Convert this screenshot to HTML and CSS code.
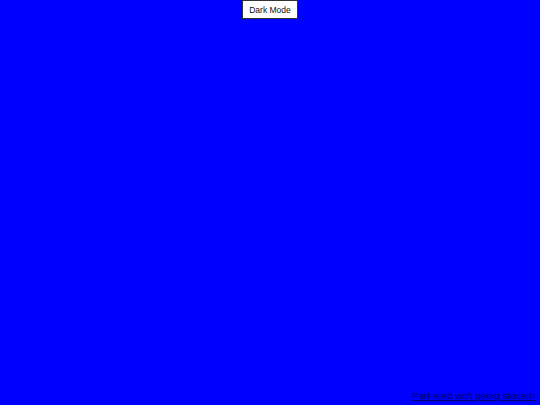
FILE: index.html
```html
<!DOCTYPE html>
<html>
<head>
<meta charset="utf-8">
<link rel="stylesheet" href="styles.css">
</head>
<body>
<div class="page">
  <div class="top">
    <button class="mode-btn">Dark Mode</button>
  </div>
  <div class="footer">
    <a class="credit" href="#">Part-nerd with georg steuern</a>
  </div>
</div>
</body>
</html>
```
FILE: styles.css
```css
html, body {
  margin: 0;
  padding: 0;
  height: 100%;
  background: #0000ff;
}
.page {
  height: 100%;
  display: flex;
  flex-direction: column;
  justify-content: space-between;
  font-family: "Liberation Sans", Arial, sans-serif;
}
.top {
  display: flex;
  justify-content: center;
}
.mode-btn {
  font-family: "Liberation Sans", Arial, sans-serif;
  font-size: 8.5px;
  color: #111;
  background: #fff;
  border: 1px solid #333;
  width: 56px;
  height: 19px;
  padding: 0;
  margin: 0;
}
.footer {
  display: flex;
  justify-content: flex-end;
  padding: 0 5px 4px 0;
}
.credit {
  font-size: 9.7px;
  color: #000066;
  text-decoration: underline;
}
```
